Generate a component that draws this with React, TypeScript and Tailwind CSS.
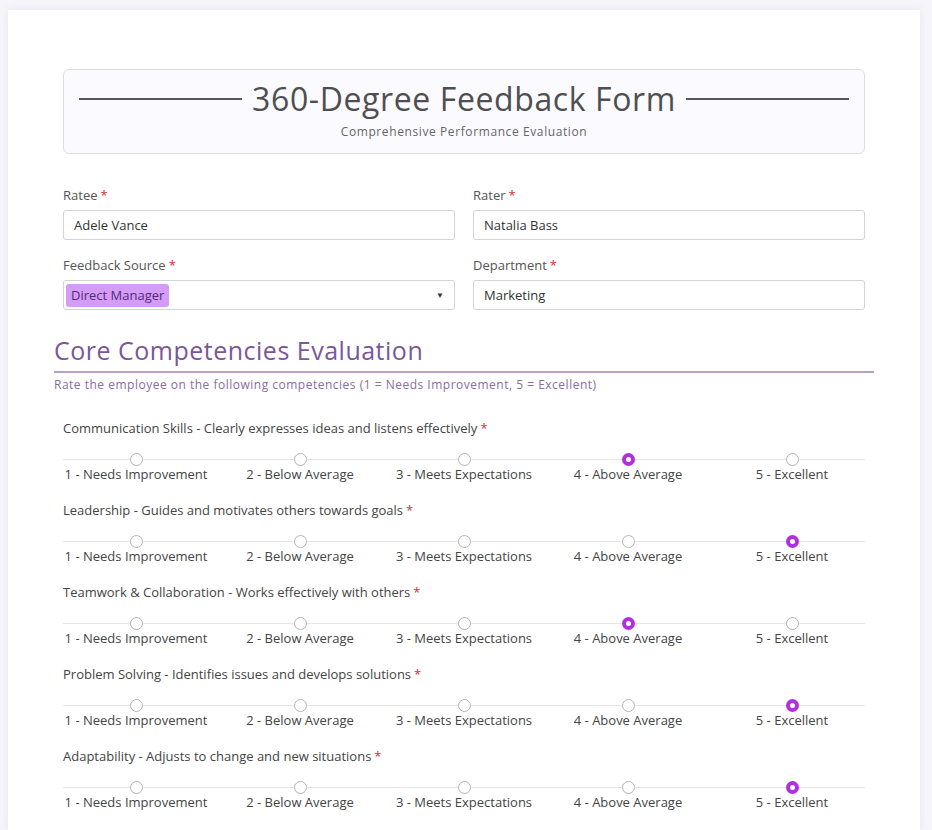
import { useState } from "react";

const options = [
  "1 - Needs Improvement",
  "2 - Below Average",
  "3 - Meets Expectations",
  "4 - Above Average",
  "5 - Excellent",
];

const competencies = [
  { label: "Communication Skills - Clearly expresses ideas and listens effectively", value: 4 },
  { label: "Leadership - Guides and motivates others towards goals", value: 5 },
  { label: "Teamwork & Collaboration - Works effectively with others", value: 4 },
  { label: "Problem Solving - Identifies issues and develops solutions", value: 5 },
  { label: "Adaptability - Adjusts to change and new situations", value: 5 },
];

function Req() {
  return <span className="text-[#d32f2f] ml-[3px]">*</span>;
}

function Field({ label, value }: { label: string; value: string }) {
  return (
    <div className="flex flex-col">
      <label className="text-[13px] text-[#555] leading-5 mb-[5px]">
        {label}
        <Req />
      </label>
      <input
        readOnly
        value={value}
        className="h-[30px] border border-[#d4d4d4] rounded-[3px] px-[10px] text-[13px] text-[#333] font-medium outline-none bg-white"
      />
    </div>
  );
}

function RatingRow({ label, initial }: { label: string; initial: number }) {
  const [value, setValue] = useState(initial);
  return (
    <div className="h-[82px]">
      <div className="px-[9px] text-[13px] text-[#444] leading-5 pt-[8px]">
        {label}
        <Req />
      </div>
      <div className="relative mt-[15px]">
        <div className="absolute left-[9px] right-[9px] top-[6px] h-px bg-[#e6e6e6]" />
        <div className="relative grid grid-cols-5">
          {options.map((o, i) => {
            const checked = value === i + 1;
            return (
              <button
                key={o}
                onClick={() => setValue(i + 1)}
                className="flex flex-col items-center"
              >
                {checked ? (
                  <span className="w-[13px] h-[13px] rounded-full border-[4px] border-[#b02fe0] bg-white" />
                ) : (
                  <span className="w-[13px] h-[13px] rounded-full border border-[#b5b5b5] bg-white" />
                )}
                <span className="text-[13px] text-[#444] leading-4 whitespace-nowrap">{o}</span>
              </button>
            );
          })}
        </div>
      </div>
    </div>
  );
}

export default function App() {
  return (
    <div
      className="min-h-[830px] bg-[#f6f5fb] pt-[10px] pl-[8px] pr-[12px]"
      style={{ fontFamily: '"Open Sans", "Liberation Sans", sans-serif' }}
    >
      <div className="bg-white min-h-[820px] shadow-[0_0_8px_rgba(120,110,160,0.12)] px-[46px] pt-[59px]">
        <div className="mx-[9px] border border-[#dedbe6] rounded-[6px] bg-[#fbfaff] h-[85px] flex flex-col items-center pt-[11px]">
          <div className="flex items-center w-full px-[15px] gap-[10px]">
            <div className="flex-1 h-[2px] bg-[#555]" />
            <h1 className="text-[32px] leading-[36px] tracking-[0.6px] text-[#4f4f4f] whitespace-nowrap">360-Degree Feedback Form</h1>
            <div className="flex-1 h-[2px] bg-[#555]" />
          </div>
          <p className="text-[12px] tracking-[0.6px] text-[#666] mt-[6px]">Comprehensive Performance Evaluation</p>
        </div>

        <div className="mx-[9px] mt-[31px] grid grid-cols-2 gap-x-[18px] gap-y-[15px]">
          <Field label="Ratee" value="Adele Vance" />
          <Field label="Rater" value="Natalia Bass" />
          <div className="flex flex-col">
            <label className="text-[13px] text-[#555] leading-5 mb-[5px]">
              Feedback Source
              <Req />
            </label>
            <div className="h-[30px] border border-[#d4d4d4] rounded-[3px] flex items-center justify-between pl-[2px] pr-[10px] bg-white">
              <span className="bg-[#d49cf6] text-[#552a7d] text-[13px] font-medium rounded-[3px] px-[5px] h-[23px] leading-[23px]">
                Direct Manager
              </span>
              <span className="text-[8px] text-[#333]">▼</span>
            </div>
          </div>
          <Field label="Department" value="Marketing" />
        </div>

        <div className="mt-[25px]">
          <h2 className="text-[25px] leading-[30px] tracking-[0.5px] text-[#7b5799]">Core Competencies Evaluation</h2>
          <div className="h-[2px] bg-[#b9a1c9] mt-[6px]" />
          <p className="text-[12px] tracking-[0.5px] text-[#8a6d9f] mt-[3px]">
            Rate the employee on the following competencies (1 = Needs Improvement, 5 = Excellent)
          </p>
        </div>

        <div className="mt-[16px]">
          {competencies.map((c) => (
            <RatingRow key={c.label} label={c.label} initial={c.value} />
          ))}
        </div>
      </div>
    </div>
  );
}
